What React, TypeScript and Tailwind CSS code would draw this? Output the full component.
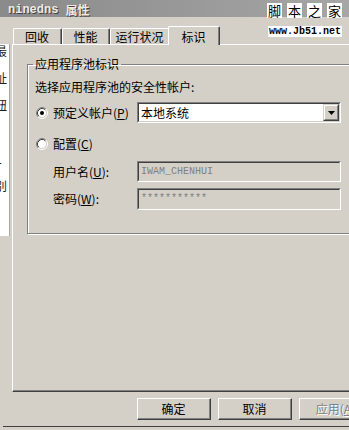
import React from "react";

const cjk = "font-['Noto_Sans_CJK_SC','Noto_Sans',sans-serif]";

function Radio({ checked }: { checked: boolean }) {
  return (
    <svg width="12" height="12" viewBox="0 0 12 12" className="shrink-0">
      <circle cx="6" cy="6" r="4.5" fill="#ffffff" />
      <path d="M2.11 9.89 A5.5 5.5 0 0 1 9.89 2.11" stroke="#808080" strokeWidth="1" fill="none" />
      <path d="M9.89 2.11 A5.5 5.5 0 0 1 2.11 9.89" stroke="#ffffff" strokeWidth="1" fill="none" />
      <path d="M2.82 9.18 A4.5 4.5 0 0 1 9.18 2.82" stroke="#404040" strokeWidth="1" fill="none" />
      <path d="M9.18 2.82 A4.5 4.5 0 0 1 2.82 9.18" stroke="#d4d0c8" strokeWidth="1" fill="none" />
      {checked && <circle cx="6" cy="6" r="2" fill="#000000" />}
    </svg>
  );
}

function Sunken({ children, className = "" }: { children: React.ReactNode; className?: string }) {
  return (
    <div
      className={
        "border-t border-l border-t-[#808080] border-l-[#808080] border-b border-r border-b-white border-r-white " +
        className
      }
    >
      <div className="h-full w-full border-t border-l border-t-[#404040] border-l-[#404040] border-b border-r border-b-[#d4d0c8] border-r-[#d4d0c8]">
        {children}
      </div>
    </div>
  );
}

function Button({ children, disabled = false }: { children: React.ReactNode; disabled?: boolean }) {
  return (
    <div className="w-[74px] h-[22px] border-t border-l border-t-white border-l-white border-b border-r border-b-[#404040] border-r-[#404040] shrink-0">
      <div className="h-full w-full border-b border-r border-b-[#808080] border-r-[#808080] flex items-center justify-center text-[12px] leading-[14px]">
        {disabled ? (
          <span className="text-[#808080] [text-shadow:1px_1px_0_#ffffff]">{children}</span>
        ) : (
          <span className="text-black">{children}</span>
        )}
      </div>
    </div>
  );
}

function Tab({ label, w, selected = false }: { label: string; w: string; selected?: boolean }) {
  return (
    <div
      className={
        (selected ? "h-[19px] -mb-px z-10 relative -ml-[2px] " : "h-[16px] ") +
        w +
        " bg-[#d4d0c8] border-t border-l border-t-white border-l-white border-r border-r-[#404040] rounded-tl-[2px] rounded-tr-[2px] shrink-0"
      }
    >
      <div className="h-full border-r border-r-[#808080] flex items-center justify-center text-[12px] leading-[14px] text-black pt-[1px]">
        {label}
      </div>
    </div>
  );
}

export default function App() {
  const leftChars = ["最", "址", "钮", ":", "L", "别", ":"];
  return (
    <div className={"w-[349px] h-[430px] bg-[#d4d0c8] overflow-hidden relative flex flex-col " + cjk}>
      {/* title bar */}
      <div className="h-[17px] shrink-0 bg-gradient-to-r from-[#8a8a8a] to-[#a6a6a6] flex items-center pl-[8px] pt-[3px]">
        <span className="font-['Liberation_Mono',monospace] font-bold text-[12px] leading-[14px] text-[#eceae4] [text-shadow:1px_1px_0_#404040]">
          ninedns
        </span>
        <span className={"ml-[7px] font-bold text-[12px] leading-[14px] text-[#eceae4] [text-shadow:1px_1px_0_#404040] " + cjk}>
          属性
        </span>
      </div>

      <div className="flex flex-1 min-h-0">
        {/* left strip (window behind) */}
        <div className="w-[12px] shrink-0 flex">
          <div className="w-[9px] mt-[27px] h-[192px] bg-white overflow-hidden flex flex-col gap-[13px]">
            {leftChars.map((c, i) => (
              <div key={i} className="h-[14px] text-[12px] leading-[14px] text-[#222] -ml-[5px]">
                {c}
              </div>
            ))}
          </div>
          <div className="w-[1px] bg-[#a8a8a8] mt-[27px] h-[192px]" />
        </div>

        {/* main column */}
        <div className="w-[345px] shrink-0 flex flex-col">
          {/* tabs */}
          <div className="h-[18px] mt-[9px] pl-[1px] flex items-end shrink-0">
            <Tab label="回收" w="w-[49px]" />
            <Tab label="性能" w="w-[48px]" />
            <Tab label="运行状况" w="w-[60px]" />
            <Tab label="标识" w="w-[52px]" selected />
          </div>

          {/* panel */}
          <div className="h-[348px] shrink-0 border-t border-l border-t-white border-l-white border-b border-r border-b-[#404040] border-r-[#404040]">
            <div className="h-full border-b border-r border-b-[#808080] border-r-[#808080] pl-[14px] pt-[12px]">
              <fieldset className="w-[330px] h-[177px] border border-[#808080] shadow-[inset_1px_1px_0_#ffffff,1px_1px_0_#ffffff]">
                <legend className="ml-[5px] px-[2px] text-[12px] leading-[14px] text-black">应用程序池标识</legend>
                <div className="flex flex-col text-[12px] leading-[14px] text-black">
                  <div className="pl-[7px] mt-[9px]">选择应用程序池的安全性帐户:</div>

                  <div className="flex items-center h-[21px] mt-[8px]">
                    <div className="w-[109px] flex items-center pl-[8px] gap-[5px]">
                      <Radio checked />
                      <span>
                        预定义帐户(<span className="underline">P</span>)
                      </span>
                    </div>
                    <Sunken className="w-[204px] h-[21px]">
                      <div className="h-full bg-white flex items-center">
                        <span className="pl-[2px] flex-1">本地系统</span>
                        <div className="w-[16px] h-[17px] border-t border-l border-t-[#d4d0c8] border-l-[#d4d0c8] border-b border-r border-b-[#404040] border-r-[#404040] bg-[#d4d0c8]">
                          <div className="h-full border-t border-l border-t-white border-l-white border-b border-r border-b-[#808080] border-r-[#808080] flex items-center justify-center">
                            <svg width="7" height="4" viewBox="0 0 7 4">
                              <path d="M0 0 H7 L3.5 4 Z" fill="#000" />
                            </svg>
                          </div>
                        </div>
                      </div>
                    </Sunken>
                  </div>

                  <div className="flex items-center h-[14px] mt-[14px] pl-[8px] gap-[5px]">
                    <Radio checked={false} />
                    <span>
                      配置(<span className="underline">C</span>)
                    </span>
                  </div>

                  <div className="flex items-center h-[21px] mt-[10px]">
                    <div className="w-[109px] pl-[25px]">
                      用户名(<span className="underline">U</span>):
                    </div>
                    <Sunken className="w-[204px] h-[21px]">
                      <div className="h-full flex items-center pl-[2px] font-['Liberation_Mono',monospace] text-[10px] text-[#808080]">
                        IWAM_CHENHUI
                      </div>
                    </Sunken>
                  </div>

                  <div className="flex items-center h-[22px] mt-[6px]">
                    <div className="w-[109px] pl-[25px]">
                      密码(<span className="underline">W</span>):
                    </div>
                    <Sunken className="w-[204px] h-[22px]">
                      <div className="h-full flex items-center pl-[2px] font-['Liberation_Mono',monospace] text-[10px] text-[#808080]">
                        ***********
                      </div>
                    </Sunken>
                  </div>
                </div>
              </fieldset>
            </div>
          </div>

          {/* buttons */}
          <div className="flex pl-[125px] mt-[6px] gap-[7px]">
            <Button>确定</Button>
            <Button>取消</Button>
            <Button disabled>
              应用(<span className="underline">A</span>)
            </Button>
          </div>
        </div>
      </div>

      {/* dialog bottom edge */}
      <div className="h-[1px] bg-[#404040] ml-[3px] shrink-0" />
      <div className="h-[3px] shrink-0" />

      {/* watermark overlay */}
      <div className="absolute top-[3px] right-[7px] flex flex-col items-end">
        <div className="flex gap-[5px]">
          {["脚", "本", "之", "家"].map((c) => (
            <span key={c} className="bg-white px-[1px] text-[13px] leading-[15px] text-black">
              {c}
            </span>
          ))}
        </div>
        <div className="mt-[8px] bg-white px-[1px] font-['Liberation_Mono',monospace] font-bold text-[10px] leading-[11px] text-black">
          www.Jb51.net
        </div>
      </div>
    </div>
  );
}
